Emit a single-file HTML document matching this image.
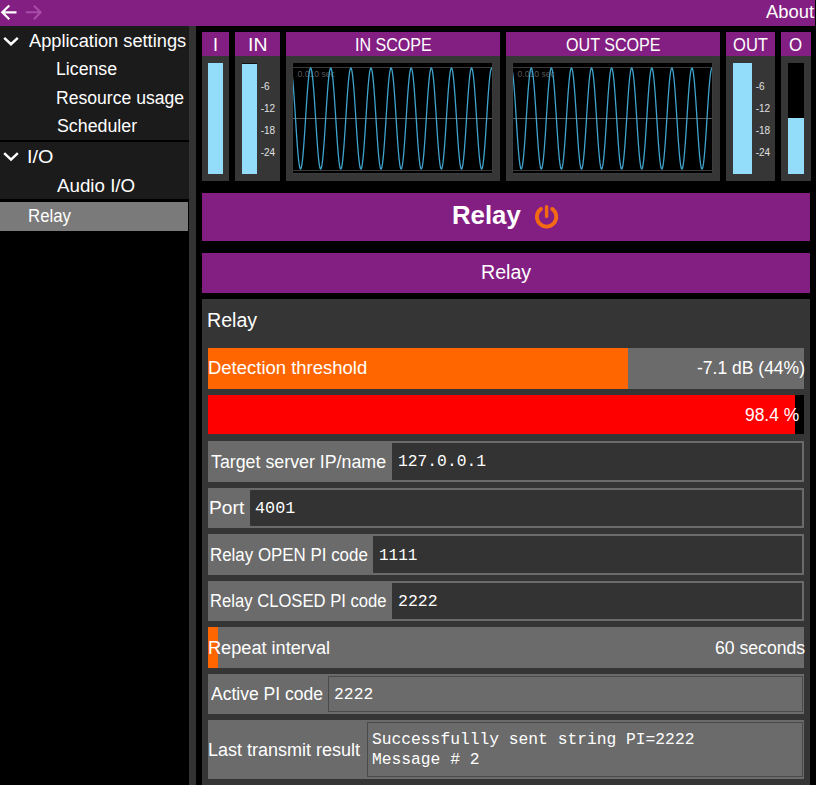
<!DOCTYPE html>
<html><head><meta charset="utf-8">
<style>
html,body{margin:0;padding:0;width:816px;height:785px;overflow:hidden;background:#000;font-family:"Liberation Sans",sans-serif;color:#fff;}
.abs{position:absolute;}
.t{position:absolute;white-space:pre;}
.pur{background:#831f82;}
.hdr{position:absolute;top:32px;height:24px;background:#831f82;}
.pan{position:absolute;top:56px;height:125px;background:#363636;}
.bar{position:absolute;background:#93dcfa;}
.ml{font-size:10px;color:#e0e0e0;line-height:12px;}
.row{position:absolute;left:208px;width:596px;background:#6b6b6b;}
</style></head><body>
<!-- top bar -->
<div class="abs pur" style="left:0;top:0;width:815px;height:26px"></div>
<svg class="abs" style="left:0;top:0" width="60" height="26">
<path d="M16.5 12.3 H2.5 M9.3 5.5 L2.3 12.3 L9.3 19.2" fill="none" stroke="#fff" stroke-width="2.2"/>
<path d="M26 12.3 H40 M34 5.8 L40.6 12.3 L34 19.2" fill="none" stroke="#a84ea8" stroke-width="2"/>
</svg>

<!-- sidebar -->
<div class="abs" style="left:0;top:26px;width:189px;height:175px;background:#1b1b1b"></div>
<div class="abs" style="left:0;top:140px;width:189px;height:2px;background:#000"></div>
<div class="abs" style="left:0;top:199px;width:189px;height:2px;background:#000"></div>
<div class="abs" style="left:0;top:202px;width:188px;height:29px;background:#7a7a7a"></div>
<div class="abs" style="left:189px;top:26px;width:7px;height:759px;background:#333"></div>
<svg class="abs" style="left:0;top:26px" width="24" height="150">
<path d="M4.2 11.8 L11 18.2 L17.8 11.8" fill="none" stroke="#fff" stroke-width="2.5"/>
<path d="M4.2 127.2 L11 133.6 L17.8 127.2" fill="none" stroke="#fff" stroke-width="2.5"/>
</svg>

<!-- meters row -->
<div class="hdr" style="left:202px;width:27px"></div>
<div class="pan" style="left:202px;width:27px"></div>
<div class="bar" style="left:208px;top:63px;width:15px;height:111px"></div>

<div class="hdr" style="left:235px;width:45px"></div>
<div class="pan" style="left:235px;width:45px"></div>
<div class="bar" style="left:242px;top:63px;width:15px;height:111px;border-top:1px solid #111;box-sizing:border-box"></div>
<div class="abs ml" style="left:260.7px;top:80.6px">-6</div><div class="abs ml" style="left:260.7px;top:102.6px">-12</div><div class="abs ml" style="left:260.7px;top:124.6px">-18</div><div class="abs ml" style="left:260.7px;top:146.6px">-24</div>

<div class="hdr" style="left:286px;width:214px"></div>
<div class="pan" style="left:286px;width:214px"></div>
<div class="abs" style="left:292px;top:63px;width:201px;height:111px;background:#000;">
<svg width="201" height="111" style="position:absolute;left:0;top:0">
<line x1="0" y1="4.5" x2="201" y2="4.5" stroke="#3a3a3a" stroke-width="1"/>
<line x1="0" y1="55.5" x2="201" y2="55.5" stroke="#5c5c5c" stroke-width="1"/>
<line x1="0" y1="107.5" x2="201" y2="107.5" stroke="#3a3a3a" stroke-width="1"/>
<text x="5.6" y="13.8" font-family="Liberation Sans" font-size="8.6" fill="#585858">0.010 sec</text>
<path d="M0.0 10.58L0.5 14.72L1.0 19.85L1.5 25.84L2.0 32.56L2.5 39.83L3.0 47.49L3.5 55.34L4.0 63.20L4.5 70.87L5.0 78.16L5.5 84.90L6.0 90.93L6.5 96.09L7.0 100.27L7.5 103.36L8.0 105.28L8.5 106.00L9.0 105.48L9.5 103.75L10.0 100.84L10.5 96.83L11.0 91.82L11.5 85.92L12.0 79.28L12.5 72.06L13.0 64.44L13.5 56.60L14.0 48.74L14.5 41.04L15.0 33.69L15.5 26.87L16.0 20.75L16.5 15.48L17.0 11.17L17.5 7.95L18.0 5.88L18.5 5.02L19.0 5.39L19.5 6.98L20.0 9.75L20.5 13.63L21.0 18.53L21.5 24.33L22.0 30.89L22.5 38.05L23.0 45.63L23.5 53.45L24.0 61.32L24.5 69.05L25.0 76.45L25.5 83.34L26.0 89.56L26.5 94.94L27.0 99.37L27.5 102.72L28.0 104.93L28.5 105.94L29.0 105.72L29.5 104.27L30.0 101.64L30.5 97.89L31.0 93.11L31.5 87.41L32.0 80.93L32.5 73.84L33.0 66.30L33.5 58.49L34.0 50.62L34.5 42.86L35.0 35.41L35.5 28.45L36.0 22.15L36.5 16.66L37.0 12.11L37.5 8.62L38.0 6.27L38.5 5.12L39.0 5.19L39.5 6.49L40.0 8.98L40.5 12.60L41.0 17.27L41.5 22.87L42.0 29.26L42.5 36.28L43.0 43.78L43.5 51.56L44.0 59.44L44.5 67.22L45.0 74.72L45.5 81.74L46.0 88.13L46.5 93.73L47.0 98.40L47.5 102.02L48.0 104.51L48.5 105.81L49.0 105.88L49.5 104.73L50.0 102.38L50.5 98.89L51.0 94.34L51.5 88.85L52.0 82.55L52.5 75.59L53.0 68.14L53.5 60.38L54.0 52.51L54.5 44.70L55.0 37.16L55.5 30.07L56.0 23.59L56.5 17.89L57.0 13.11L57.5 9.36L58.0 6.73L58.5 5.28L59.0 5.06L59.5 6.07L60.0 8.28L60.5 11.63L61.0 16.06L61.5 21.44L62.0 27.66L62.5 34.55L63.0 41.95L63.5 49.68L64.0 57.55L64.5 65.37L65.0 72.95L65.5 80.11L66.0 86.67L66.5 92.47L67.0 97.37L67.5 101.25L68.0 104.02L68.5 105.61L69.0 105.98L69.5 105.12L70.0 103.05L70.5 99.83L71.0 95.52L71.5 90.25L72.0 84.13L72.5 77.31L73.0 69.96L73.5 62.26L74.0 54.40L74.5 46.56L75.0 38.94L75.5 31.72L76.0 25.08L76.5 19.18L77.0 14.17L77.5 10.16L78.0 7.25L78.5 5.52L79.0 5.00L79.5 5.72L80.0 7.64L80.5 10.73L81.0 14.91L81.5 20.07L82.0 26.10L82.5 32.84L83.0 40.13L83.5 47.80L84.0 55.66L84.5 63.51L85.0 71.17L85.5 78.44L86.0 85.16L86.5 91.15L87.0 96.28L87.5 100.42L88.0 103.46L88.5 105.34L89.0 106.00L89.5 105.43L90.0 103.65L90.5 100.70L91.0 96.65L91.5 91.60L92.0 85.67L92.5 79.00L93.0 71.76L93.5 64.13L94.0 56.29L94.5 48.43L95.0 40.74L95.5 33.41L96.0 26.61L96.5 20.52L97.0 15.28L97.5 11.02L98.0 7.85L98.5 5.83L99.0 5.02L99.5 5.43L100.0 7.07L100.5 9.88L101.0 13.81L101.5 18.75L102.0 24.58L102.5 31.17L103.0 38.34L103.5 45.94L104.0 53.77L104.5 61.64L105.0 69.36L105.5 76.74L106.0 83.61L106.5 89.79L107.0 95.14L107.5 99.52L108.0 102.83L108.5 104.99L109.0 105.95L109.5 105.68L110.0 104.19L110.5 101.51L111.0 97.72L111.5 92.89L112.0 87.16L112.5 80.66L113.0 73.54L113.5 65.99L114.0 58.18L114.5 50.30L115.0 42.56L115.5 35.12L116.0 28.19L116.5 21.91L117.0 16.46L117.5 11.95L118.0 8.50L118.5 6.20L119.0 5.10L119.5 5.22L120.0 6.57L120.5 9.10L121.0 12.77L121.5 17.48L122.0 23.11L122.5 29.53L123.0 36.58L123.5 44.09L124.0 51.88L124.5 59.75L125.0 67.53L125.5 75.01L126.0 82.01L126.5 88.38L127.0 93.94L127.5 98.56L128.0 102.14L128.5 104.58L129.0 105.83L129.5 105.86L130.0 104.66L130.5 102.26L131.0 98.73L131.5 94.14L132.0 88.61L132.5 82.28L133.0 75.30L133.5 67.83L134.0 60.07L134.5 52.19L135.0 44.39L135.5 36.87L136.0 29.80L136.5 23.35L137.0 17.68L137.5 12.94L138.0 9.23L138.5 6.65L139.0 5.25L139.5 5.08L140.0 6.13L140.5 8.39L141.0 11.79L141.5 16.26L142.0 21.68L142.5 27.92L143.0 34.84L143.5 42.25L144.0 49.99L144.5 57.86L145.0 65.68L145.5 73.25L146.0 80.38L146.5 86.92L147.0 92.68L147.5 97.54L148.0 101.38L148.5 104.11L149.0 105.64L149.5 105.96L150.0 105.06L150.5 102.94L151.0 99.67L151.5 95.33L152.0 90.02L152.5 83.87L153.0 77.02L153.5 69.66L154.0 61.95L154.5 54.08L155.0 46.25L155.5 38.64L156.0 31.44L156.5 24.83L157.0 18.96L157.5 13.99L158.0 10.02L158.5 7.16L159.0 5.48L159.5 5.01L160.0 5.77L160.5 7.74L161.0 10.88L161.5 15.09L162.0 20.30L162.5 26.36L163.0 33.12L163.5 40.44L164.0 48.11L164.5 55.97L165.0 63.82L165.5 71.46L166.0 78.72L166.5 85.41L167.0 91.38L167.5 96.47L168.0 100.56L168.5 103.56L169.0 105.39L169.5 106.00L170.0 105.39L170.5 103.56L171.0 100.56L171.5 96.47L172.0 91.38L172.5 85.41L173.0 78.72L173.5 71.46L174.0 63.82L174.5 55.97L175.0 48.11L175.5 40.44L176.0 33.12L176.5 26.36L177.0 20.30L177.5 15.09L178.0 10.88L178.5 7.74L179.0 5.77L179.5 5.01L180.0 5.48L180.5 7.16L181.0 10.02L181.5 13.99L182.0 18.96L182.5 24.83L183.0 31.44L183.5 38.64L184.0 46.25L184.5 54.08L185.0 61.95L185.5 69.66L186.0 77.02L186.5 83.87L187.0 90.02L187.5 95.33L188.0 99.67L188.5 102.94L189.0 105.06L189.5 105.96L190.0 105.64L190.5 104.11L191.0 101.38L191.5 97.54L192.0 92.68L192.5 86.92L193.0 80.38L193.5 73.25L194.0 65.68L194.5 57.86L195.0 49.99L195.5 42.25L196.0 34.84L196.5 27.92L197.0 21.68L197.5 16.26L198.0 11.79L198.5 8.39L199.0 6.13L199.5 5.08L200.0 5.25L200.5 6.65L201.0 9.23" fill="none" stroke="#3fa3cc" stroke-width="1.3"/>
<path d="M0.5 0 V110.5 H200.5 V0" fill="none" stroke="#3c3c3c" stroke-width="1"/>
</svg></div>

<div class="hdr" style="left:506px;width:214px"></div>
<div class="pan" style="left:506px;width:214px"></div>
<div class="abs" style="left:512px;top:63px;width:201px;height:111px;background:#000;">
<svg width="201" height="111" style="position:absolute;left:0;top:0">
<line x1="0" y1="4.5" x2="201" y2="4.5" stroke="#3a3a3a" stroke-width="1"/>
<line x1="0" y1="55.5" x2="201" y2="55.5" stroke="#5c5c5c" stroke-width="1"/>
<line x1="0" y1="107.5" x2="201" y2="107.5" stroke="#3a3a3a" stroke-width="1"/>
<text x="5.6" y="13.8" font-family="Liberation Sans" font-size="8.6" fill="#585858">0.010 sec</text>
<path d="M0.0 6.50L0.5 9.00L1.0 12.63L1.5 17.32L2.0 22.93L2.5 29.34L3.0 36.39L3.5 43.91L4.0 51.71L4.5 59.60L5.0 67.40L5.5 74.90L6.0 81.93L6.5 88.31L7.0 93.89L7.5 98.53L8.0 102.13L8.5 104.58L9.0 105.83L9.5 105.86L10.0 104.65L10.5 102.25L11.0 98.70L11.5 94.09L12.0 88.55L12.5 82.20L13.0 75.19L13.5 67.70L14.0 59.92L14.5 52.03L15.0 44.22L15.5 36.69L16.0 29.61L16.5 23.17L17.0 17.52L17.5 12.80L18.0 9.12L18.5 6.57L19.0 5.22L19.5 5.10L20.0 6.21L20.5 8.52L21.0 11.98L21.5 16.50L22.0 21.98L22.5 28.27L23.0 35.23L23.5 42.68L24.0 50.45L24.5 58.34L25.0 66.16L25.5 73.73L26.0 80.84L26.5 87.34L27.0 93.06L27.5 97.86L28.0 101.63L28.5 104.27L29.0 105.71L29.5 105.94L30.0 104.93L30.5 102.71L31.0 99.34L31.5 94.90L32.0 89.49L32.5 83.26L33.0 76.35L33.5 68.93L34.0 61.18L34.5 53.29L35.0 45.45L35.5 37.87L36.0 30.71L36.5 24.16L37.0 18.37L37.5 13.49L38.0 9.64L38.5 6.90L39.0 5.36L39.5 5.04L40.0 5.95L40.5 8.07L41.0 11.35L41.5 15.71L42.0 21.04L42.5 27.21L43.0 34.08L43.5 41.47L44.0 49.20L44.5 57.08L45.0 64.93L45.5 72.54L46.0 79.74L46.5 86.35L47.0 92.20L47.5 97.16L48.0 101.10L48.5 103.92L49.0 105.56L49.5 105.98L50.0 105.17L50.5 103.14L51.0 99.95L51.5 95.68L52.0 90.42L52.5 84.31L53.0 77.49L53.5 70.14L54.0 62.43L54.5 54.55L55.0 46.70L55.5 39.06L56.0 31.82L56.5 25.16L57.0 19.24L57.5 14.20L58.0 10.18L58.5 7.26L59.0 5.52L59.5 5.00L60.0 5.72L60.5 7.65L61.0 10.75L61.5 14.94L62.0 20.13L62.5 26.18L63.0 32.94L63.5 40.26L64.0 47.94L64.5 55.82L65.0 63.68L65.5 71.35L66.0 78.62L66.5 85.34L67.0 91.32L67.5 96.43L68.0 100.54L68.5 103.55L69.0 105.38L69.5 106.00L70.0 105.38L70.5 103.55L71.0 100.54L71.5 96.43L72.0 91.32L72.5 85.34L73.0 78.62L73.5 71.35L74.0 63.68L74.5 55.82L75.0 47.94L75.5 40.26L76.0 32.94L76.5 26.18L77.0 20.13L77.5 14.94L78.0 10.75L78.5 7.65L79.0 5.72L79.5 5.00L80.0 5.52L80.5 7.26L81.0 10.18L81.5 14.20L82.0 19.24L82.5 25.16L83.0 31.82L83.5 39.06L84.0 46.70L84.5 54.55L85.0 62.43L85.5 70.14L86.0 77.49L86.5 84.31L87.0 90.42L87.5 95.68L88.0 99.95L88.5 103.14L89.0 105.17L89.5 105.98L90.0 105.56L90.5 103.92L91.0 101.10L91.5 97.16L92.0 92.20L92.5 86.35L93.0 79.74L93.5 72.54L94.0 64.93L94.5 57.08L95.0 49.20L95.5 41.47L96.0 34.08L96.5 27.21L97.0 21.04L97.5 15.71L98.0 11.35L98.5 8.07L99.0 5.95L99.5 5.04L100.0 5.36L100.5 6.90L101.0 9.64L101.5 13.49L102.0 18.37L102.5 24.16L103.0 30.71L103.5 37.87L104.0 45.45L104.5 53.29L105.0 61.18L105.5 68.93L106.0 76.35L106.5 83.26L107.0 89.49L107.5 94.90L108.0 99.34L108.5 102.71L109.0 104.93L109.5 105.94L110.0 105.71L110.5 104.27L111.0 101.63L111.5 97.86L112.0 93.06L112.5 87.34L113.0 80.84L113.5 73.73L114.0 66.16L114.5 58.34L115.0 50.45L115.5 42.68L116.0 35.23L116.5 28.27L117.0 21.98L117.5 16.50L118.0 11.98L118.5 8.52L119.0 6.21L119.5 5.10L120.0 5.22L120.5 6.57L121.0 9.12L121.5 12.80L122.0 17.52L122.5 23.17L123.0 29.61L123.5 36.69L124.0 44.22L124.5 52.03L125.0 59.92L125.5 67.70L126.0 75.19L126.5 82.20L127.0 88.55L127.5 94.09L128.0 98.70L128.5 102.25L129.0 104.65L129.5 105.86L130.0 105.83L130.5 104.58L131.0 102.13L131.5 98.53L132.0 93.89L132.5 88.31L133.0 81.93L133.5 74.90L134.0 67.40L134.5 59.60L135.0 51.71L135.5 43.91L136.0 36.39L136.5 29.34L137.0 22.93L137.5 17.32L138.0 12.63L138.5 9.00L139.0 6.50L139.5 5.19L140.0 5.12L140.5 6.28L141.0 8.64L141.5 12.14L142.0 16.70L142.5 22.21L143.0 28.54L143.5 35.52L144.0 42.99L144.5 50.77L145.0 58.66L145.5 66.47L146.0 74.02L146.5 81.11L147.0 87.58L147.5 93.27L148.0 98.03L148.5 101.75L149.0 104.35L149.5 105.75L150.0 105.92L150.5 104.86L151.0 102.60L151.5 99.18L152.0 94.70L152.5 89.26L153.0 83.00L153.5 76.06L154.0 68.62L154.5 60.86L155.0 52.97L155.5 45.14L156.0 37.57L156.5 30.43L157.0 23.91L157.5 18.16L158.0 13.31L158.5 9.50L159.0 6.82L159.5 5.32L160.0 5.05L160.5 6.01L161.0 8.18L161.5 11.50L162.0 15.91L162.5 21.27L163.0 27.48L163.5 34.36L164.0 41.77L164.5 49.51L165.0 57.40L165.5 65.24L166.0 72.84L166.5 80.02L167.0 86.60L167.5 92.42L168.0 97.33L168.5 101.23L169.0 104.01L169.5 105.60L170.0 105.98L170.5 105.11L171.0 103.04L171.5 99.80L172.0 95.48L172.5 90.19L173.0 84.05L173.5 77.21L174.0 69.84L174.5 62.12L175.0 54.24L175.5 46.39L176.0 38.76L176.5 31.54L177.0 24.90L177.5 19.02L178.0 14.02L178.5 10.04L179.0 7.17L179.5 5.48L180.0 5.01L180.5 5.77L181.0 7.75L181.5 10.90L182.0 15.13L182.5 20.35L183.0 26.43L183.5 33.22L184.0 40.56L184.5 48.26L185.0 56.13L185.5 63.99L186.0 71.65L186.5 78.90L187.0 85.59L187.5 91.54L188.0 96.61L188.5 100.68L189.0 103.64L189.5 105.43L190.0 106.00L190.5 105.33L191.0 103.45L191.5 100.39L192.0 96.24L192.5 91.10L193.0 85.08L193.5 78.34L194.0 71.05L194.5 63.37L195.0 55.50L195.5 47.63L196.0 39.95L196.5 32.66L197.0 25.92L197.5 19.90L198.0 14.76L198.5 10.61L199.0 7.55L199.5 5.67L200.0 5.00L200.5 5.57L201.0 7.36" fill="none" stroke="#3fa3cc" stroke-width="1.3"/>
<path d="M0.5 0 V110.5 H200.5 V0" fill="none" stroke="#3c3c3c" stroke-width="1"/>
</svg></div>

<div class="hdr" style="left:726px;width:49px"></div>
<div class="pan" style="left:726px;width:49px"></div>
<div class="bar" style="left:733px;top:63px;width:19px;height:111px"></div>
<div class="abs ml" style="left:755.7px;top:80.6px">-6</div><div class="abs ml" style="left:755.7px;top:102.6px">-12</div><div class="abs ml" style="left:755.7px;top:124.6px">-18</div><div class="abs ml" style="left:755.7px;top:146.6px">-24</div>

<div class="hdr" style="left:781px;width:30px"></div>
<div class="pan" style="left:781px;width:30px"></div>
<div class="abs" style="left:788px;top:63px;width:16px;height:111px;background:#000"></div>
<div class="bar" style="left:788px;top:118px;width:16px;height:56px"></div>

<!-- relay header -->
<div class="abs pur" style="left:202px;top:193px;width:608px;height:48px"></div>
<svg class="abs" style="left:533px;top:203px" width="27" height="27">
<path d="M8.04 5.9 A9.7 9.7 0 1 0 19.16 5.9" fill="none" stroke="#f46a14" stroke-width="3.8" stroke-linecap="round"/>
<line x1="13.6" y1="3.8" x2="13.6" y2="13.4" stroke="#f46a14" stroke-width="3.4" stroke-linecap="round"/>
</svg>
<div class="abs pur" style="left:202px;top:253px;width:608px;height:40px"></div>

<!-- panel -->
<div class="abs" style="left:202px;top:299px;width:608px;height:486px;background:#353535"></div>

<div class="row" style="top:348px;height:41px"></div>
<div class="abs" style="left:208px;top:348px;width:420px;height:41px;background:#ff6600"></div>

<div class="abs" style="left:208px;top:395px;width:596px;height:39px;background:#000"></div>
<div class="abs" style="left:208px;top:395px;width:587px;height:39px;background:#ff0000"></div>

<div class="row" style="top:441px;height:41px"></div>
<div class="abs" style="left:392px;top:443px;width:410px;height:37px;background:#333"></div>
<div class="row" style="top:488px;height:40px"></div>
<div class="abs" style="left:250px;top:490px;width:552px;height:36px;background:#333"></div>
<div class="row" style="top:534px;height:41px"></div>
<div class="abs" style="left:373px;top:536px;width:429px;height:37px;background:#333"></div>
<div class="row" style="top:581px;height:40px"></div>
<div class="abs" style="left:392px;top:583px;width:410px;height:36px;background:#333"></div>

<div class="row" style="top:627px;height:41px"></div>
<div class="abs" style="left:208px;top:627px;width:10px;height:41px;background:#ff6600"></div>

<div class="row" style="top:674px;height:40px"></div>
<div class="abs" style="left:328px;top:676px;width:475px;height:36px;box-sizing:border-box;border:1px solid #4a4a4a"></div>
<div class="row" style="top:720px;height:59px"></div>
<div class="abs" style="left:367px;top:722px;width:436px;height:55px;box-sizing:border-box;border:1px solid #4a4a4a"></div>


<div class="t" style="left:766.00px;top:3px;font-family:'Liberation Sans',sans-serif;font-size:18px;line-height:18px;font-weight:400;color:#ffffff;transform:scaleX(1.0213);transform-origin:0 0;">About</div>
<div class="t" style="left:29.20px;top:32px;font-family:'Liberation Sans',sans-serif;font-size:18px;line-height:18px;font-weight:400;color:#ffffff;transform:scaleX(1.0132);transform-origin:0 0;">Application settings</div>
<div class="t" style="left:56.00px;top:60px;font-family:'Liberation Sans',sans-serif;font-size:18px;line-height:18px;font-weight:400;color:#ffffff;transform:scaleX(0.9841);transform-origin:0 0;">License</div>
<div class="t" style="left:56.00px;top:89px;font-family:'Liberation Sans',sans-serif;font-size:18px;line-height:18px;font-weight:400;color:#ffffff;transform:scaleX(0.9767);transform-origin:0 0;">Resource usage</div>
<div class="t" style="left:57.00px;top:117px;font-family:'Liberation Sans',sans-serif;font-size:18px;line-height:18px;font-weight:400;color:#ffffff;transform:scaleX(0.9878);transform-origin:0 0;">Scheduler</div>
<div class="t" style="left:27.00px;top:148px;font-family:'Liberation Sans',sans-serif;font-size:18px;line-height:18px;font-weight:400;color:#ffffff;transform:scaleX(1.1000);transform-origin:0 0;">I/O</div>
<div class="t" style="left:57.00px;top:177px;font-family:'Liberation Sans',sans-serif;font-size:18px;line-height:18px;font-weight:400;color:#ffffff;transform:scaleX(1.0411);transform-origin:0 0;">Audio I/O</div>
<div class="t" style="left:28.00px;top:207px;font-family:'Liberation Sans',sans-serif;font-size:18px;line-height:18px;font-weight:400;color:#ffffff;transform:scaleX(0.9333);transform-origin:0 0;">Relay</div>
<div class="t" style="left:213.10px;top:36px;font-family:'Liberation Sans',sans-serif;font-size:18px;line-height:18px;font-weight:400;color:#ffffff;">I</div>
<div class="t" style="left:247.70px;top:36px;font-family:'Liberation Sans',sans-serif;font-size:18px;line-height:18px;font-weight:400;color:#ffffff;transform:scaleX(1.0772);transform-origin:0 0;">IN</div>
<div class="t" style="left:354.70px;top:36px;font-family:'Liberation Sans',sans-serif;font-size:18px;line-height:18px;font-weight:400;color:#ffffff;transform:scaleX(0.8929);transform-origin:0 0;">IN SCOPE</div>
<div class="t" style="left:566.00px;top:36px;font-family:'Liberation Sans',sans-serif;font-size:18px;line-height:18px;font-weight:400;color:#ffffff;transform:scaleX(0.8942);transform-origin:0 0;">OUT SCOPE</div>
<div class="t" style="left:732.80px;top:36px;font-family:'Liberation Sans',sans-serif;font-size:18px;line-height:18px;font-weight:400;color:#ffffff;transform:scaleX(0.9196);transform-origin:0 0;">OUT</div>
<div class="t" style="left:789.35px;top:36px;font-family:'Liberation Sans',sans-serif;font-size:18px;line-height:18px;font-weight:400;color:#ffffff;transform:scaleX(0.9361);transform-origin:0 0;">O</div>
<div class="t" style="left:451.50px;top:203px;font-family:'Liberation Sans',sans-serif;font-size:25px;line-height:25px;font-weight:700;color:#ffffff;transform:scaleX(1.0310);transform-origin:0 0;">Relay</div>
<div class="t" style="left:480.65px;top:262px;font-family:'Liberation Sans',sans-serif;font-size:20px;line-height:20px;font-weight:400;color:#ffffff;transform:scaleX(0.9810);transform-origin:0 0;">Relay</div>
<div class="t" style="left:206.65px;top:310px;font-family:'Liberation Sans',sans-serif;font-size:20px;line-height:20px;font-weight:400;color:#ffffff;transform:scaleX(0.9801);transform-origin:0 0;">Relay</div>
<div class="t" style="left:207.65px;top:359px;font-family:'Liberation Sans',sans-serif;font-size:18px;line-height:18px;font-weight:400;color:#ffffff;transform:scaleX(1.0264);transform-origin:0 0;">Detection threshold</div>
<div class="t" style="left:697.35px;top:359px;font-family:'Liberation Sans',sans-serif;font-size:18px;line-height:18px;font-weight:400;color:#ffffff;transform:scaleX(0.9726);transform-origin:0 0;">-7.1 dB (44%)</div>
<div class="t" style="left:744.65px;top:406px;font-family:'Liberation Sans',sans-serif;font-size:18px;line-height:18px;font-weight:400;color:#ffffff;transform:scaleX(0.9670);transform-origin:0 0;">98.4 %</div>
<div class="t" style="left:210.70px;top:453px;font-family:'Liberation Sans',sans-serif;font-size:18px;line-height:18px;font-weight:400;color:#ffffff;transform:scaleX(0.9887);transform-origin:0 0;">Target server IP/name</div>
<div class="t" style="left:208.70px;top:499px;font-family:'Liberation Sans',sans-serif;font-size:18px;line-height:18px;font-weight:400;color:#ffffff;transform:scaleX(1.0673);transform-origin:0 0;">Port</div>
<div class="t" style="left:209.70px;top:546px;font-family:'Liberation Sans',sans-serif;font-size:18px;line-height:18px;font-weight:400;color:#ffffff;transform:scaleX(0.9390);transform-origin:0 0;">Relay OPEN PI code</div>
<div class="t" style="left:209.70px;top:592px;font-family:'Liberation Sans',sans-serif;font-size:18px;line-height:18px;font-weight:400;color:#ffffff;transform:scaleX(0.9241);transform-origin:0 0;">Relay CLOSED PI code</div>
<div class="t" style="left:207.65px;top:639px;font-family:'Liberation Sans',sans-serif;font-size:18px;line-height:18px;font-weight:400;color:#ffffff;transform:scaleX(1.0085);transform-origin:0 0;">Repeat interval</div>
<div class="t" style="left:714.65px;top:639px;font-family:'Liberation Sans',sans-serif;font-size:18px;line-height:18px;font-weight:400;color:#ffffff;transform:scaleX(0.9784);transform-origin:0 0;">60 seconds</div>
<div class="t" style="left:210.70px;top:685px;font-family:'Liberation Sans',sans-serif;font-size:18px;line-height:18px;font-weight:400;color:#ffffff;transform:scaleX(0.9739);transform-origin:0 0;">Active PI code</div>
<div class="t" style="left:208.30px;top:741px;font-family:'Liberation Sans',sans-serif;font-size:18px;line-height:18px;font-weight:400;color:#ffffff;transform:scaleX(1.0001);transform-origin:0 0;">Last transmit result</div>
<div class="t" style="left:398.00px;top:454px;font-family:'Liberation Mono',monospace;font-size:16.3px;line-height:16.3px;font-weight:400;color:#ffffff;transform:scaleX(1.0005);transform-origin:0 0;">127.0.0.1</div>
<div class="t" style="left:254.70px;top:501px;font-family:'Liberation Mono',monospace;font-size:16.3px;line-height:16.3px;font-weight:400;color:#ffffff;transform:scaleX(1.0305);transform-origin:0 0;">4001</div>
<div class="t" style="left:379.10px;top:548px;font-family:'Liberation Mono',monospace;font-size:16.3px;line-height:16.3px;font-weight:400;color:#ffffff;transform:scaleX(0.9817);transform-origin:0 0;">1111</div>
<div class="t" style="left:398.00px;top:594px;font-family:'Liberation Mono',monospace;font-size:16.3px;line-height:16.3px;font-weight:400;color:#ffffff;transform:scaleX(1.0151);transform-origin:0 0;">2222</div>
<div class="t" style="left:334.10px;top:687px;font-family:'Liberation Mono',monospace;font-size:16.3px;line-height:16.3px;font-weight:400;color:#ffffff;">2222</div>
<div class="t" style="left:372.00px;top:732px;font-family:'Liberation Mono',monospace;font-size:16.3px;line-height:16.3px;font-weight:400;color:#ffffff;">Successfullly sent string PI=2222</div>
<div class="t" style="left:372.00px;top:752px;font-family:'Liberation Mono',monospace;font-size:16.3px;line-height:16.3px;font-weight:400;color:#ffffff;">Message # 2</div>
</body></html>
